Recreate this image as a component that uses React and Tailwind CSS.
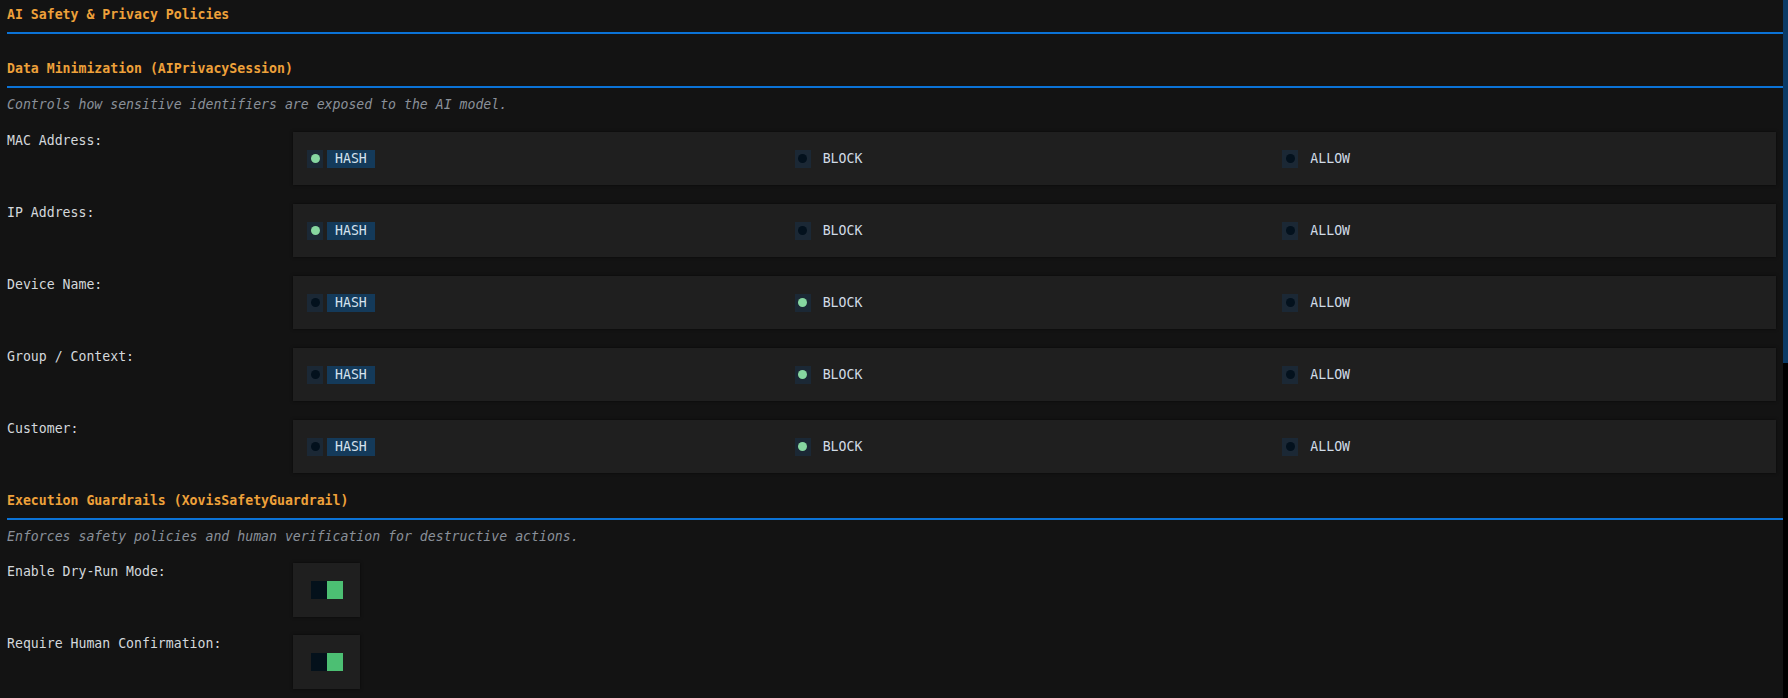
import React from "react";

const rows = [
  { label: "MAC Address:", value: "HASH" },
  { label: "IP Address:", value: "HASH" },
  { label: "Device Name:", value: "BLOCK" },
  { label: "Group / Context:", value: "BLOCK" },
  { label: "Customer:", value: "BLOCK" },
];

function Radio({ text, checked, chip }) {
  return (
    <div className="flex items-center">
      <div className="w-[16px] h-[18px] bg-[#1b2835] flex items-center justify-center">
        <div className={checked ? "w-[9px] h-[9px] rounded-full bg-[#86d6a0]" : "w-[9px] h-[9px] rounded-full bg-[#03111d]"} />
      </div>
      <div className={chip ? "ml-[4px] px-[8px] h-[18px] flex items-center bg-[#143a5a] text-[#d6e2ee]" : "ml-[4px] px-[8px] h-[18px] flex items-center text-[#d0dbe6]"}>
        {text}
      </div>
    </div>
  );
}

function Toggle() {
  return (
    <div className="flex w-[32px] h-[18px]">
      <div className="w-[16px] h-full bg-[#04111b]" />
      <div className="w-[16px] h-full bg-[#4cbf73]" />
    </div>
  );
}

function Heading({ children }) {
  return (
    <div>
      <div className="pl-[7px] h-[18px] leading-[18px] font-bold text-[#eea13a]">{children}</div>
      <div className="mt-[8px] ml-[7px] h-[2px] bg-[#0b73d6]" />
    </div>
  );
}

export default function App() {
  return (
    <div
      className="w-full h-[698px] bg-[#131313] flex overflow-hidden text-[13.2px] text-[#d6d6d6]"
      style={{ fontFamily: '"DejaVu Sans Mono", "Liberation Mono", monospace' }}
    >
      <div className="flex-1 flex flex-col pt-[6px]">
        <Heading>AI Safety &amp; Privacy Policies</Heading>
        <div className="mt-[26px]">
          <Heading>Data Minimization (AIPrivacySession)</Heading>
        </div>
        <div className="mt-[8px] pl-[7px] h-[18px] leading-[18px] italic text-[#8a9099]">
          Controls how sensitive identifiers are exposed to the AI model.
        </div>
        <div className="mt-[18px] flex flex-col gap-[19px] pl-[7px] pr-[7px]">
          {rows.map((r) => (
            <div key={r.label} className="flex">
              <div className="w-[286px] leading-[18px] text-[#d4d8dc]">{r.label}</div>
              <div className="flex-1 h-[53px] bg-[#1f1f1f] shadow-[0_0_3px_rgba(0,0,0,0.6)] grid grid-cols-3 items-center pl-[14px] pr-[6px]">
                <Radio text="HASH" chip checked={r.value === "HASH"} />
                <Radio text="BLOCK" checked={r.value === "BLOCK"} />
                <Radio text="ALLOW" checked={r.value === "ALLOW"} />
              </div>
            </div>
          ))}
        </div>
        <div className="mt-[19px]">
          <Heading>Execution Guardrails (XovisSafetyGuardrail)</Heading>
        </div>
        <div className="mt-[8px] pl-[7px] h-[18px] leading-[18px] italic text-[#8a9099]">
          Enforces safety policies and human verification for destructive actions.
        </div>
        <div className="mt-[17px] flex flex-col gap-[18px] pl-[7px]">
          {["Enable Dry-Run Mode:", "Require Human Confirmation:"].map((l) => (
            <div key={l} className="flex">
              <div className="w-[286px] leading-[18px] text-[#d4d8dc]">{l}</div>
              <div className="w-[67px] h-[54px] bg-[#1f1f1f] shadow-[0_0_3px_rgba(0,0,0,0.6)] flex items-center pl-[18px]">
                <Toggle />
              </div>
            </div>
          ))}
        </div>
      </div>
      <div className="w-[5px] h-full bg-black flex flex-col">
        <div className="h-[363px] bg-[#0b3a66]" />
      </div>
    </div>
  );
}
